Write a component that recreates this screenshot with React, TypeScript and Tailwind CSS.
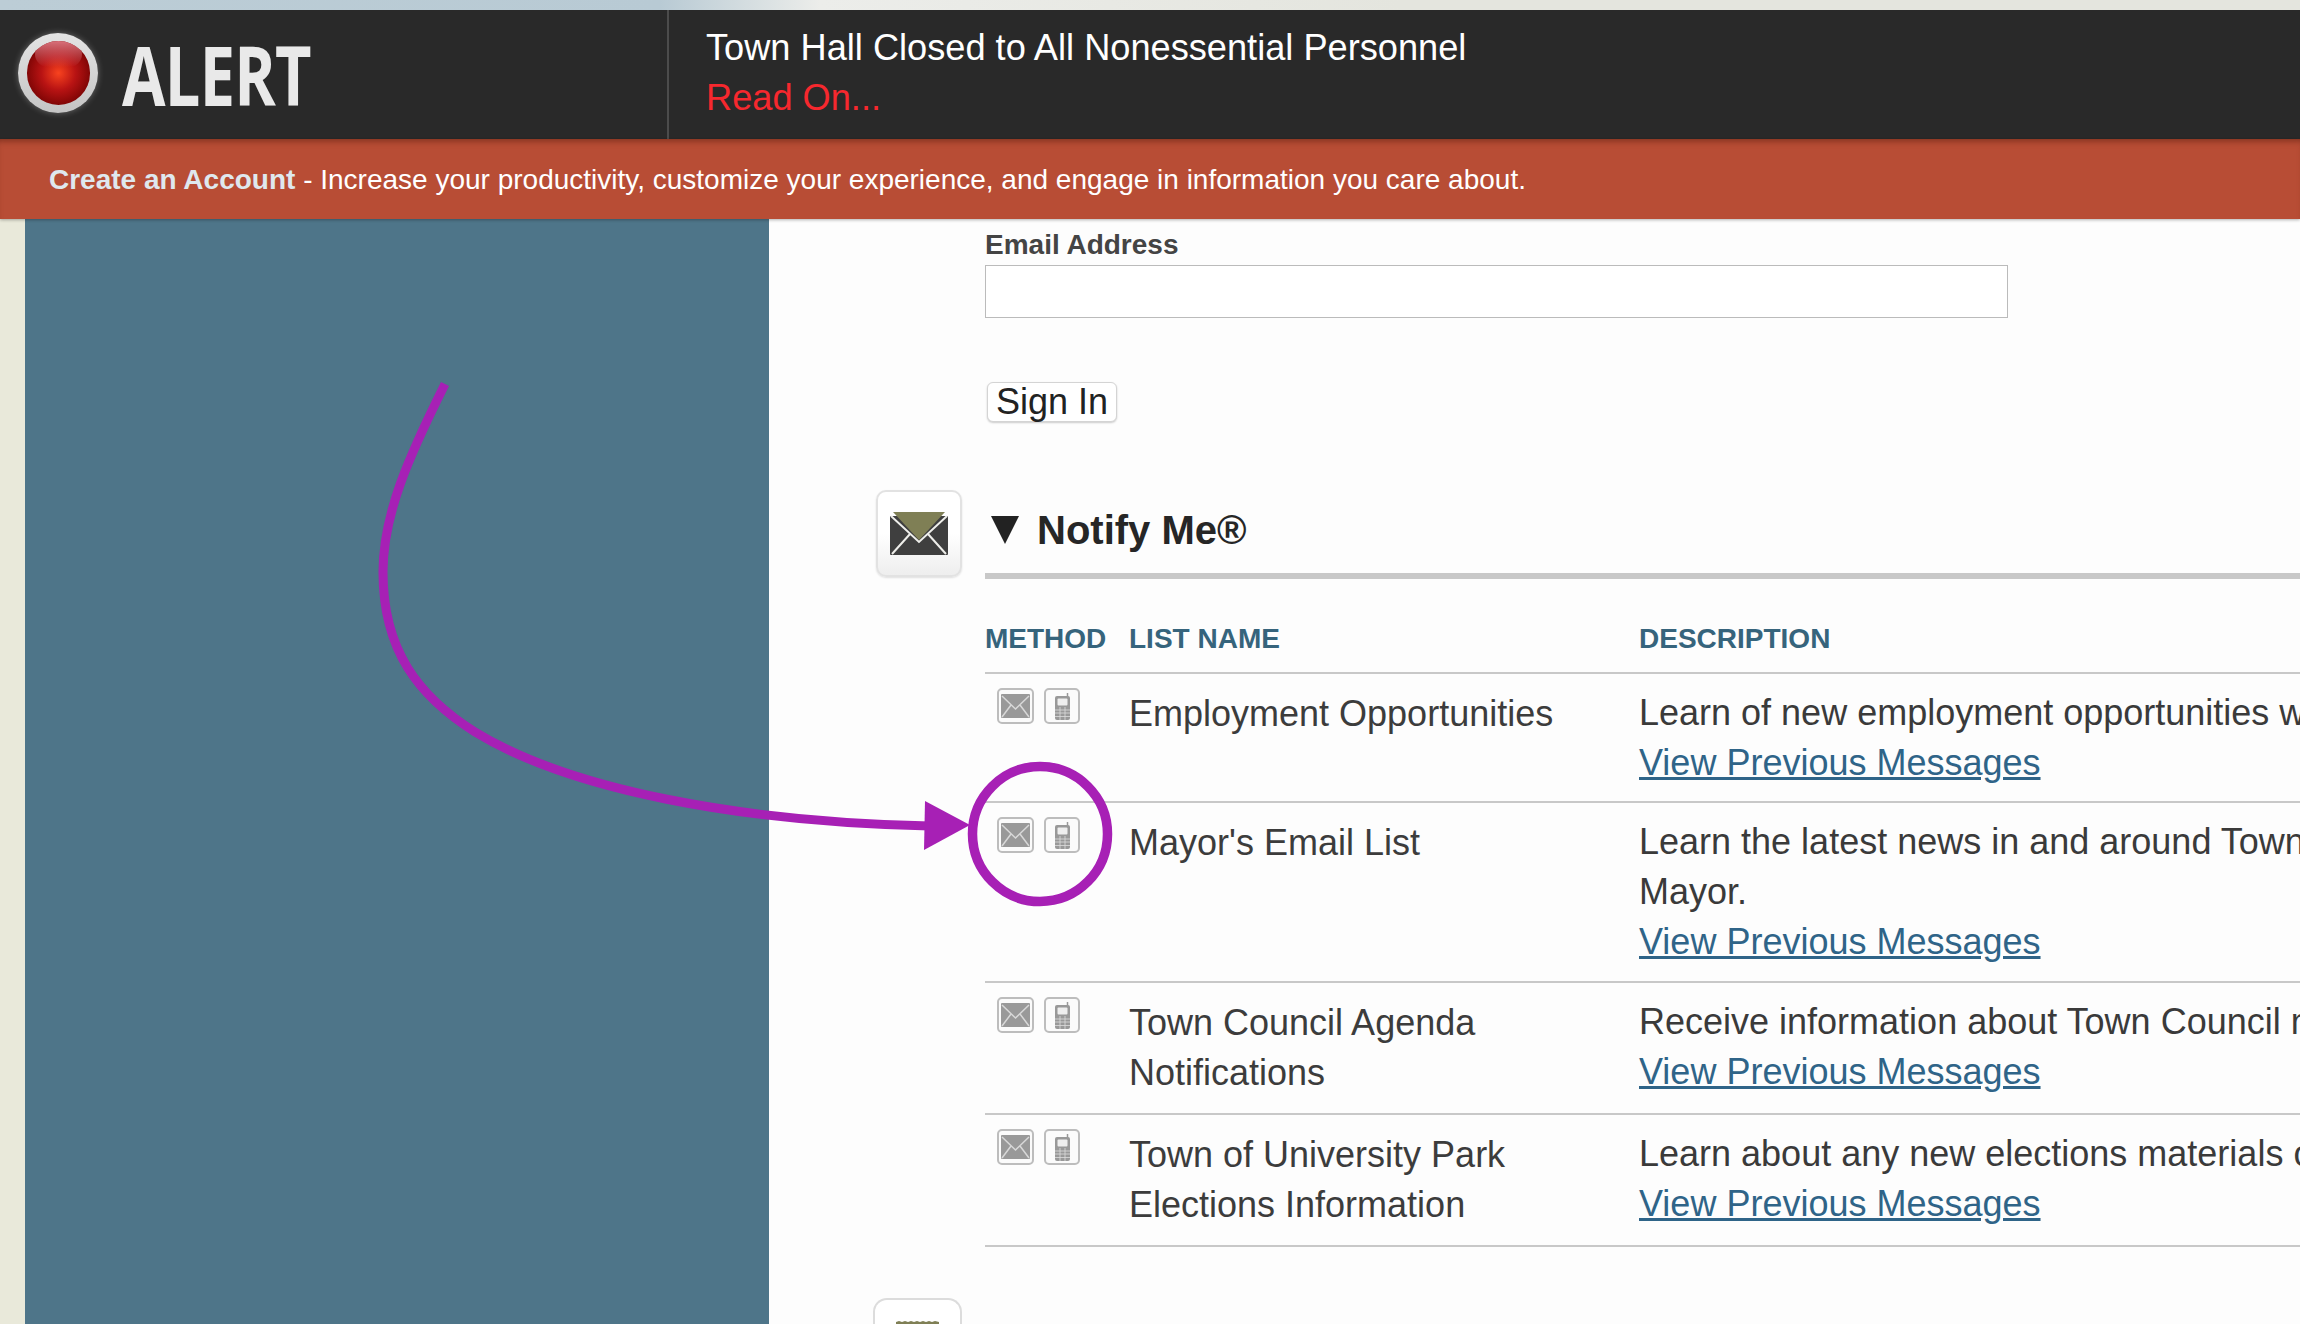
import React from 'react';

const rows = [
  { name: ['Employment Opportunities'], desc: ['Learn of new employment opportunities with the Town.'], h: 'h-[129px]' },
  { name: ["Mayor's Email List"], desc: ['Learn the latest news in and around Town from the Town', 'Mayor.'], h: 'h-[180px]' },
  { name: ['Town Council Agenda', 'Notifications'], desc: ['Receive information about Town Council meetings and agendas.'], h: 'h-[132px]' },
  { name: ['Town of University Park', 'Elections Information'], desc: ['Learn about any new elections materials or announcements.'], h: 'h-[132px]' },
];

const MailIcon = () => (
  <div className="w-[37px] h-[36px] rounded-[5px] border-2 border-[#bdbdbd] bg-[#fbfbfb] flex items-center justify-center">
    <svg width="29" height="24" viewBox="0 0 29 24">
      <rect width="29" height="24" fill="#999" rx="1" />
      <path d="M1 2 L14.5 15 L28 2 M1 23 L10 11 M28 23 L19 11" stroke="#d8d8d8" strokeWidth="1.5" fill="none" />
    </svg>
  </div>
);

const PhoneIcon = () => (
  <div className="w-[36px] h-[36px] rounded-[5px] border-2 border-[#bdbdbd] bg-[#fbfbfb] flex items-center justify-center">
    <svg width="15" height="27" viewBox="0 0 15 27">
      <path d="M12.5 0 V4" stroke="#999" strokeWidth="1.5" />
      <rect y="3" width="15" height="24" rx="2" fill="#999" />
      <rect x="2.5" y="5.5" width="10" height="7" rx="1" fill="#eee" />
      <path d="M0 17 H15 M0 20 H15 M0 23.5 H15 M5 14 V27 M10 14 V27" stroke="#ddd" strokeWidth="0.8" />
    </svg>
  </div>
);

export default function App() {
  return (
    <div className="relative h-[1324px] w-[2300px] overflow-hidden bg-[#fdfdfd] font-['Liberation_Sans',Arial,sans-serif]">
      <div className="h-[10px] bg-[linear-gradient(90deg,#bccdd6_0,#b8cad4_660px,#ecedea_820px,#e4e5de_1400px)]" />

      {/* alert bar */}
      <div className="flex h-[129px] bg-[#292929]">
        <div className="flex w-[669px] items-center pl-[18px] border-r-[2px] border-[#4c4c4c]">
          <div className="mb-[3px] h-[80px] w-[80px] shrink-0 rounded-full bg-gradient-to-b from-[#e4e4e4] to-[#c4c4c4] shadow-[0_0_6px_rgba(255,255,255,0.3)] flex items-center justify-center">
            <div className="relative h-[64px] w-[63px] overflow-hidden rounded-full bg-[radial-gradient(circle_at_50%_50%,#f8431f_0%,#b81313_38%,#7a0404_75%,#5f0202_100%)]">
              <div className="absolute left-[8px] top-[0px] h-[26px] w-[47px] rounded-full bg-gradient-to-b from-[#d9717b] to-transparent" />
            </div>
          </div>
          <span className="ml-[24px] mb-[2px] origin-left scale-x-[0.76] font-['Open_Sans',sans-serif] text-[83px] leading-none font-bold tracking-[-1px] text-[#e9e9e9]">ALERT</span>
        </div>
        <div className="pl-[37px] pt-[13px] text-[36.2px] leading-[50px]">
          <div className="text-white">Town Hall Closed to All Nonessential Personnel</div>
          <div className="text-[#f6282e]">Read On...</div>
        </div>
      </div>

      {/* account bar */}
      <div className="relative z-10 flex h-[80px] items-center bg-[#b84d35] pl-[49px] pt-[1px] text-[28px] text-white shadow-[inset_0_6px_6px_-4px_rgba(90,30,15,0.6),0_1px_3px_rgba(0,0,0,0.3)]">
        <span className="font-bold text-[#dfe8ee]">Create an Account</span>
        <span>&nbsp;- Increase your productivity, customize your experience, and engage in information you care about.</span>
      </div>

      <div className="flex h-[1105px]">
        <div className="w-[25px] shrink-0 bg-[#e9e9da]" />
        <div className="w-[744px] shrink-0 bg-[#4e7589]" />

        <main className="flex-1 pl-[107px] text-[#333]">
          <div className="pl-[109px]">
            <div className="pt-[10px] text-[28px] leading-[32px] font-bold text-[#444]">Email Address</div>
            <div className="mt-[4px] h-[53px] w-[1023px] border border-[#bbb] bg-white" />
            <button className="mt-[64px] ml-[2px] block h-[40px] w-[130px] rounded-[6px] border border-[#d4d4d4] bg-white text-[36px] leading-none text-[#222] shadow-[0_1px_2px_rgba(0,0,0,0.2)]">Sign In</button>
          </div>

          <div className="mt-[68px] flex">
            <div className="flex h-[87px] w-[86px] shrink-0 items-center justify-center rounded-[10px] border-2 border-[#e2e2e2] bg-gradient-to-b from-white via-white to-[#eeeeee] shadow-[0_1px_2px_rgba(0,0,0,0.12)]">
              <svg width="58" height="43" viewBox="0 0 58 43">
                <rect y="4" width="58" height="39" rx="1" fill="#3f3f3f" />
                <path d="M3 0 H55 L29 28 Z" fill="#7f7f55" />
                <path d="M1 4 L29 30 L57 4 M2 42 L20 22 M56 42 L38 22" stroke="#eeeeea" strokeWidth="2" fill="none" />
              </svg>
            </div>

            <div className="ml-[23px] flex-1">
              <div className="flex h-[89px] items-center border-b-[6px] border-[#c8c8c8] pb-[3px]">
                <svg width="28" height="28" viewBox="0 0 28 28" className="ml-[6px]">
                  <path d="M0 0 H28 L14 28 Z" fill="#222" />
                </svg>
                <h2 className="ml-[18px] text-[40px] leading-none font-bold text-[#262626]">Notify Me®</h2>
              </div>

              <div className="flex h-[95px] items-end border-b-2 border-[#c8c8c8] pb-[17px] text-[28px] leading-[32px] font-bold text-[#36647c]">
                <div className="w-[144px]">METHOD</div>
                <div className="w-[510px]">LIST NAME</div>
                <div>DESCRIPTION</div>
              </div>

              {rows.map((r) => (
                <div key={r.name[0]} className={`flex border-b-2 border-[#c8c8c8] ${r.h}`}>
                  <div className="flex w-[144px] gap-[10px] pl-[12px] pt-[14px]">
                    <MailIcon />
                    <PhoneIcon />
                  </div>
                  <div className="w-[510px] pt-[15px] text-[36px] leading-[50px] text-[#3c3c3c]">
                    {r.name.map((n) => (
                      <div key={n}>{n}</div>
                    ))}
                  </div>
                  <div className="pt-[14px] text-[36px] leading-[50px] whitespace-nowrap text-[#3a3a3a]">
                    {r.desc.map((d) => (
                      <div key={d}>{d}</div>
                    ))}
                    <a className="text-[#2f6488] underline">View Previous Messages</a>
                  </div>
                </div>
              ))}

              {/* next section's icon, cut by the window */}
              <div className="relative">
                <div className="absolute left-[-112px] top-[51px] flex h-[40px] w-[89px] items-start justify-center rounded-t-[14px] border-2 border-b-0 border-[#dcdcdc] bg-white pt-[21px]">
                  <svg width="43" height="6" viewBox="0 0 43 6">
                    <path d="M0 1 L3 0 L6 1 L9 0 L12 1 L15 0 L18 1 L21 0 L24 1 L27 0 L30 1 L33 0 L36 1 L39 0 L43 1 V6 H0 Z" fill="#7f7f55" />
                  </svg>
                </div>
              </div>
            </div>
          </div>
        </main>
      </div>

      {/* annotation drawn over the page */}
      <svg className="absolute left-0 top-0" width="2300" height="1324" viewBox="0 0 2300 1324" fill="none">
        <path d="M445 384 C408 458 383 515 383 572 C383 650 418 696 475 732 C570 790 740 822 930 826" stroke="#a720b5" strokeWidth="9" />
        <path d="M925 801 L970 825 L924 850 Z" fill="#a720b5" />
        <circle cx="1040" cy="834" r="67.5" stroke="#a720b5" strokeWidth="9.5" />
      </svg>
    </div>
  );
}
